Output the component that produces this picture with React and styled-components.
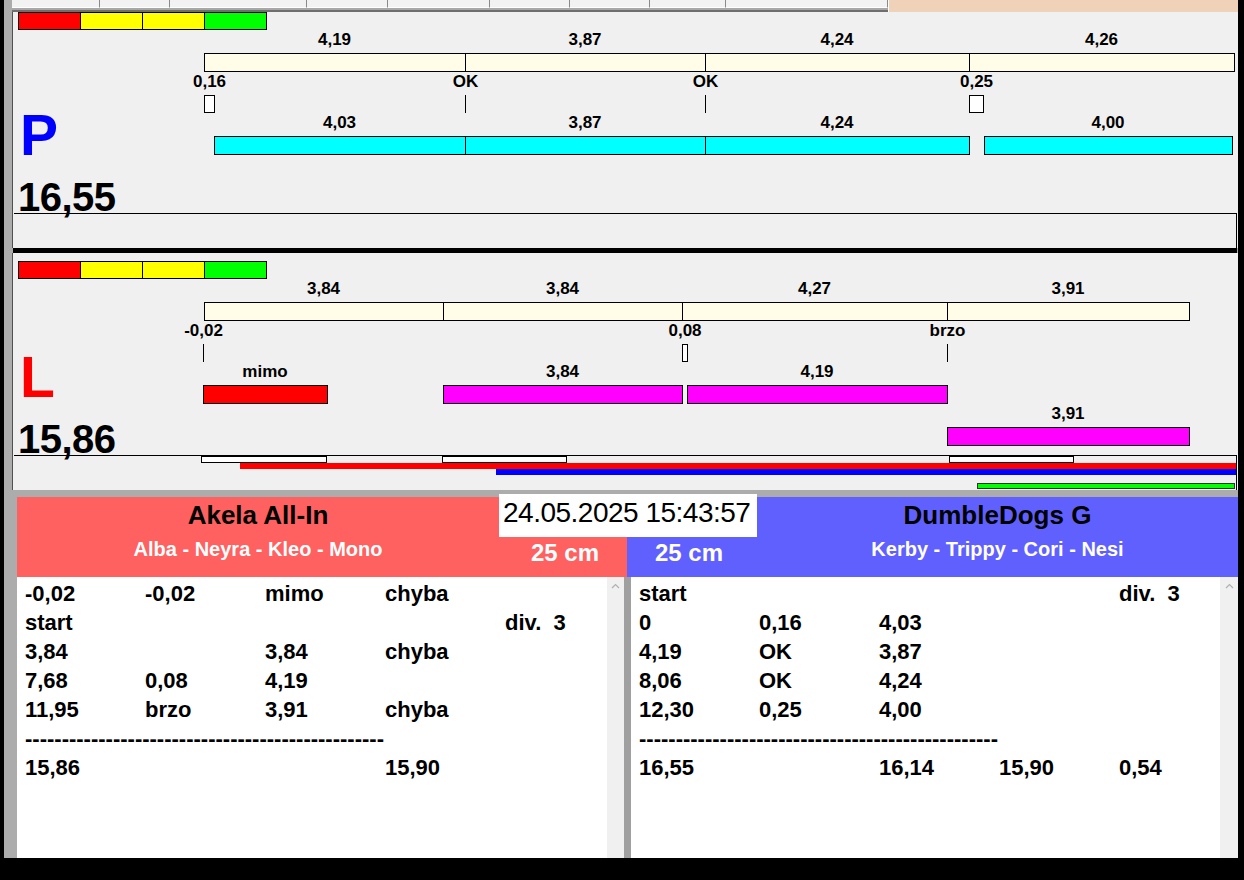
import React from "react";
import styled, { createGlobalStyle } from "styled-components";

const GlobalStyle = createGlobalStyle`
  html, body { margin: 0; padding: 0; background: #000; }
  body { font-family: "Liberation Sans", Arial, sans-serif; }
  * { box-sizing: border-box; }
`;

const FONT = `"Liberation Sans", Arial, sans-serif`;
const ORIGIN = 194; // page x of the timeline canvas
const STRIP_ORIGIN = 14;

const Screen = styled.div`
  width: 1244px;
  height: 880px;
  background: #000;
  padding: 0 6px 22px 4px;
  overflow: hidden;
`;

const Window = styled.div`
  width: 1234px;
  height: 858px;
  background: #acacac;
  padding-left: 8px;
  display: flex;
  flex-direction: column;
  overflow: hidden;
`;

const TabStrip = styled.div`
  height: 12px;
  display: flex;
  flex: 0 0 12px;
`;

const TabsArea = styled.div`
  flex: 0 0 876px;
  display: flex;
  align-items: flex-start;
  border-bottom: 2px solid #6e6e6e;
  background: #a8a8a8;
`;

const Tab = styled.div`
  flex: 0 0 ${(p) => p.$w}px;
  height: 8px;
  background: #f2f2f2;
  border-right: 1px solid #8a8a8a;
  border-bottom: 1px solid #ffffff;
`;

const Peach = styled.div`
  flex: 1;
  background: #f0d2b9;
  border-left: 1px solid #ffffff;
`;

const Panel = styled.div`
  flex: 0 0 ${(p) => p.$h}px;
  display: flex;
  flex-direction: column;
  background: #f0f0f0;
  border-left: 1px solid #505050;
  padding-top: ${(p) => p.$pt || 0}px;
  min-width: 0;
`;

const ScaleBar = styled.div`
  flex: 0 0 18px;
  margin-left: 5px;
  width: 249px;
  display: flex;
  border: 1px solid #000;
`;

const ScaleSeg = styled.div`
  flex: 0 0 ${(p) => (p.$last ? 61 : 62)}px;
  background: ${(p) => p.$c};
  border-right: ${(p) => (p.$last ? "none" : "1px solid #000")};
`;

const Body = styled.div`
  flex: 0 0 ${(p) => p.$h}px;
  display: grid;
  grid-template-columns: 181px minmax(0, 1fr);
`;

const LeftCol = styled.div`
  display: flex;
  flex-direction: column;
  justify-content: flex-end;
  padding-left: 5px;
`;

const Letter = styled.div`
  font: bold 57px/56px ${FONT};
  color: ${(p) => p.$c};
  margin: 0 0 14px 2px;
`;

const Total = styled.div`
  font: bold 40px/40px ${FONT};
  color: #000;
  margin-bottom: -4px;
  letter-spacing: -0.5px;
`;

const Canvas = styled.div`
  position: relative;
`;

const Bar = styled.div`
  position: absolute;
  height: 19px;
  border: 1px solid #000;
  background: ${(p) => p.$c};
`;

const Mark = styled.div`
  position: absolute;
  top: 65px;
  height: 18px;
  ${(p) =>
    p.$line
      ? "width: 1px; background: #000;"
      : "border: 1px solid #000; background: #fff;"}
`;

const Label = styled.div`
  position: absolute;
  transform: translateX(-50%);
  font: bold 17px/20px ${FONT};
  white-space: nowrap;
  color: #000;
`;

const Strip = styled.div`
  flex: 0 0 35px;
  position: relative;
  margin: 0 1px 0 1px;
  border-top: 1px solid #000;
  border-right: 1px solid #000;
`;

const Slot = styled.div`
  position: absolute;
  top: 0;
  height: 7px;
  border: 1px solid #000;
  background: #fff;
`;

const Lane = styled.div`
  position: absolute;
  height: 6px;
  right: 0;
  background: ${(p) => p.$c};
  ${(p) => (p.$border ? "border: 1px solid #333;" : "")}
`;

const Divider = styled.div`
  flex: 0 0 5px;
  margin-left: 1px;
  margin-right: 1px;
  background: #000;
`;

const Gap = styled.div`
  flex: 0 0 7px;
`;

const Bottom = styled.div`
  flex: 1;
  position: relative;
  display: flex;
  flex-direction: column;
  margin-left: 5px;
  min-width: 0;
`;

const Header = styled.div`
  flex: 0 0 80px;
  display: flex;
`;

const TeamHeader = styled.div`
  flex: ${(p) => p.$flex};
  background: ${(p) => p.$bg};
  display: grid;
  grid-template-columns: ${(p) => p.$cols};
`;

const NameBlock = styled.div`
  display: flex;
  flex-direction: column;
  align-items: center;
  padding-top: 3px;
`;

const TeamName = styled.div`
  font: bold 26px/30px ${FONT};
  color: #000;
`;

const Dogs = styled.div`
  font: bold 20px/24px ${FONT};
  color: #fff;
  margin-top: 7px;
`;

const Size = styled.div`
  align-self: end;
  justify-self: ${(p) => p.$align};
  padding: 0 28px 10px 28px;
  font: bold 24px/28px ${FONT};
  color: #fff;
`;

const DateBox = styled.div`
  position: absolute;
  left: 482px;
  top: -3px;
  width: 258px;
  height: 43px;
  background: #fff;
  padding-left: 4px;
  font: 28px/38px ${FONT};
  letter-spacing: -0.5px;
  color: #000;
`;

const Lists = styled.div`
  flex: 1;
  display: flex;
`;

const ListBox = styled.div`
  flex: 0 0 ${(p) => p.$w}px;
  width: ${(p) => p.$w}px;
  min-width: 0;
  overflow: hidden;
  background: #fff;
  padding: 2px 0 0 8px;
`;

const Scroll = styled.div`
  flex: 0 0 ${(p) => p.$w}px;
  background: #f0f0f0;
  display: flex;
  justify-content: center;
  align-items: flex-start;
  padding-top: 6px;
`;

const Sep = styled.div`
  flex: 0 0 7px;
  background: #a0a0a0;
`;

const Row = styled.div`
  display: grid;
  grid-template-columns: repeat(5, 120px);
  height: 29px;
  font: bold 22px/29px ${FONT};
  color: #000;
  white-space: pre;
`;

const Dashes = styled.div`
  height: 29px;
  font: bold 22px/29px ${FONT};
  color: #000;
  white-space: pre;
`;

const Up = () => (
  <svg width="9" height="6" viewBox="0 0 9 6">
    <path d="M1 5 L4.5 1.5 L8 5" fill="none" stroke="#b0b0b0" strokeWidth="1.2" />
  </svg>
);

const CREAM = "#fffde8";

const P_DATA = {
  top: [
    { x: 204, e: 465, t: "4,19" },
    { x: 465, e: 705, t: "3,87" },
    { x: 705, e: 969, t: "4,24" },
    { x: 969, e: 1234, t: "4,26" },
  ],
  marks: [
    { x: 204, w: 10, t: "0,16" },
    { x: 465, w: 0, t: "OK" },
    { x: 705, w: 0, t: "OK" },
    { x: 969, w: 14, t: "0,25" },
  ],
  rows: [
    [
      { x: 214, e: 465, t: "4,03", c: "#00ffff" },
      { x: 465, e: 705, t: "3,87", c: "#00ffff" },
      { x: 705, e: 969, t: "4,24", c: "#00ffff" },
      { x: 984, e: 1232, t: "4,00", c: "#00ffff" },
    ],
  ],
};

const L_DATA = {
  top: [
    { x: 204, e: 443, t: "3,84" },
    { x: 443, e: 682, t: "3,84" },
    { x: 682, e: 947, t: "4,27" },
    { x: 947, e: 1189, t: "3,91" },
  ],
  marks: [
    { x: 203, w: 0, t: "-0,02" },
    { x: 682, w: 5, t: "0,08" },
    { x: 947, w: 0, t: "brzo" },
  ],
  rows: [
    [
      { x: 203, e: 327, t: "mimo", c: "#ff0000", lx: 265 },
      { x: 443, e: 682, t: "3,84", c: "#ff00ff" },
      { x: 687, e: 947, t: "4,19", c: "#ff00ff" },
    ],
    [{ x: 947, e: 1189, t: "3,91", c: "#ff00ff" }],
  ],
};

function Timeline({ data }) {
  return (
    <Canvas>
      {data.top.map((s, i) => (
        <React.Fragment key={"t" + i}>
          <Label style={{ left: (s.x + s.e) / 2 - ORIGIN, top: 0 }}>{s.t}</Label>
          <Bar $c={CREAM} style={{ left: s.x - ORIGIN, width: s.e - s.x + 1, top: 23 }} />
        </React.Fragment>
      ))}
      {data.marks.map((m, i) => (
        <React.Fragment key={"m" + i}>
          <Label style={{ left: m.x + m.w / 2 - ORIGIN + 0.5, top: 42 }}>{m.t}</Label>
          <Mark
            $line={m.w === 0}
            style={{ left: m.x - ORIGIN, width: m.w === 0 ? 1 : m.w + 1 }}
          />
        </React.Fragment>
      ))}
      {data.rows.map((row, r) =>
        row.map((b, i) => (
          <React.Fragment key={"r" + r + i}>
            <Label style={{ left: (b.lx || (b.x + b.e) / 2) - ORIGIN, top: 83 + 42 * r }}>
              {b.t}
            </Label>
            <Bar
              $c={b.c}
              style={{ left: b.x - ORIGIN, width: b.e - b.x + 1, top: 106 + 42 * r }}
            />
          </React.Fragment>
        ))
      )}
    </Canvas>
  );
}

const SCALE = ["#ff0000", "#ffff00", "#ffff00", "#00ff00"];

function Scale() {
  return (
    <ScaleBar>
      {SCALE.map((c, i) => (
        <ScaleSeg key={i} $c={c} $last={i === SCALE.length - 1} />
      ))}
    </ScaleBar>
  );
}

const LEFT_ROWS = [
  ["-0,02", "-0,02", "mimo", "chyba", ""],
  ["start", "", "", "", "div.  3"],
  ["3,84", "", "3,84", "chyba", ""],
  ["7,68", "0,08", "4,19", "", ""],
  ["11,95", "brzo", "3,91", "chyba", ""],
  "dash",
  ["15,86", "", "", "15,90", ""],
];

const RIGHT_ROWS = [
  ["start", "", "", "", "div.  3"],
  ["0", "0,16", "4,03", "", ""],
  ["4,19", "OK", "3,87", "", ""],
  ["8,06", "OK", "4,24", "", ""],
  ["12,30", "0,25", "4,00", "", ""],
  "dash",
  ["16,55", "", "16,14", "15,90", "0,54"],
];

const DASHES = "-".repeat(49);

function ResultList({ rows, w }) {
  return (
    <ListBox $w={w}>
      {rows.map((r, i) =>
        r === "dash" ? (
          <Dashes key={i}>{DASHES}</Dashes>
        ) : (
          <Row key={i}>
            {r.map((c, j) => (
              <span key={j}>{c}</span>
            ))}
          </Row>
        )
      )}
    </ListBox>
  );
}

const TABS = [88, 70, 137, 81, 102, 80, 80, 76, 162];

export default function App() {
  return (
    <>
      <GlobalStyle />
      <Screen>
        <Window>
          <TabStrip>
            <TabsArea>
              {TABS.map((w, i) => (
                <Tab key={i} $w={w} />
              ))}
            </TabsArea>
            <Peach />
          </TabStrip>

          <Panel $h={236}>
            <Scale />
            <Body $h={183}>
              <LeftCol>
                <Letter $c="#0000ff">P</Letter>
                <Total>16,55</Total>
              </LeftCol>
              <Timeline data={P_DATA} />
            </Body>
            <Strip />
          </Panel>

          <Divider />

          <Panel $h={237} $pt={8}>
            <Scale />
            <Body $h={176}>
              <LeftCol>
                <Letter $c="#ff0000">L</Letter>
                <Total>15,86</Total>
              </LeftCol>
              <Timeline data={L_DATA} />
            </Body>
            <Strip>
              {[
                [201, 326],
                [442, 566],
                [949, 1073],
              ].map(([a, b], i) => (
                <Slot key={i} style={{ left: a - STRIP_ORIGIN, width: b - a + 1 }} />
              ))}
              <Lane $c="#ff0000" style={{ left: 240 - STRIP_ORIGIN, top: 7 }} />
              <Lane $c="#0000ff" style={{ left: 496 - STRIP_ORIGIN, top: 13 }} />
              <Lane $c="#00ff00" $border style={{ left: 977 - STRIP_ORIGIN, top: 27, right: 1 }} />
            </Strip>
          </Panel>

          <Gap />

          <Bottom>
            <Header>
              <TeamHeader $flex="0 0 610px" $bg="#ff6060" $cols="482px 1fr">
                <NameBlock>
                  <TeamName>Akela All-In</TeamName>
                  <Dogs>Alba - Neyra - Kleo - Mono</Dogs>
                </NameBlock>
                <Size $align="end">25 cm</Size>
              </TeamHeader>
              <TeamHeader $flex="1" $bg="#6060ff" $cols="1fr 481px">
                <Size $align="start">25 cm</Size>
                <NameBlock>
                  <TeamName>DumbleDogs G</TeamName>
                  <Dogs>Kerby - Trippy - Cori - Nesi</Dogs>
                </NameBlock>
              </TeamHeader>
            </Header>
            <DateBox>24.05.2025 15:43:57</DateBox>
            <Lists>
              <ResultList rows={LEFT_ROWS} w={590} />
              <Scroll $w={17}>
                <Up />
              </Scroll>
              <Sep />
              <ResultList rows={RIGHT_ROWS} w={589} />
              <Scroll $w={18}>
                <Up />
              </Scroll>
            </Lists>
          </Bottom>
        </Window>
      </Screen>
    </>
  );
}
